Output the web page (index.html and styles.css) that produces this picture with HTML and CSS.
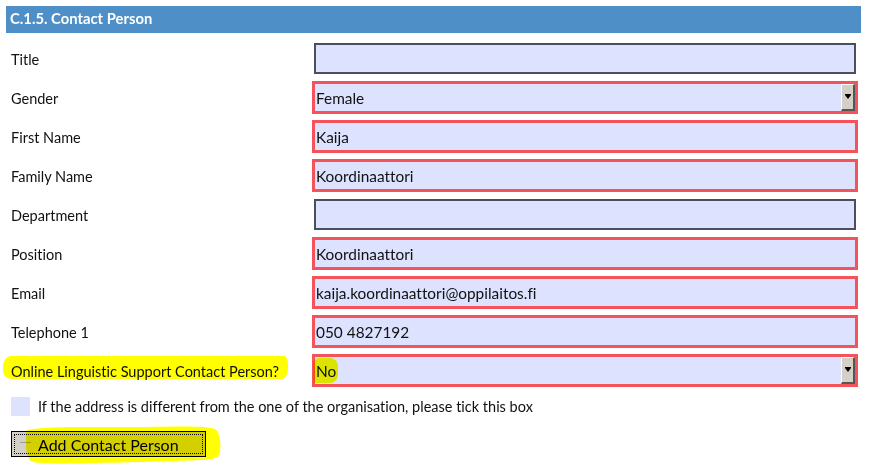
FILE: index.html
```html
<!DOCTYPE html>
<html>
<head>
<meta charset="utf-8">
<link rel="stylesheet" href="styles.css">
</head>
<body>
<div class="page">
  <div class="section-head">C.1.5. Contact Person</div>
  <div class="rows">
    <div class="label">Title</div>
    <div class="field plain"></div>

    <div class="label">Gender</div>
    <div class="field req select"><span class="val">Female</span><span class="arrow"><span class="tri"></span></span></div>

    <div class="label">First Name</div>
    <div class="field req"><span class="val">Kaija</span></div>

    <div class="label">Family Name</div>
    <div class="field req"><span class="val">Koordinaattori</span></div>

    <div class="label">Department</div>
    <div class="field plain"></div>

    <div class="label">Position</div>
    <div class="field req"><span class="val">Koordinaattori</span></div>

    <div class="label">Email</div>
    <div class="field req"><span class="val">kaija.koordinaattori@oppilaitos.fi</span></div>

    <div class="label">Telephone 1</div>
    <div class="field req"><span class="val">050 4827192</span></div>

    <div class="label">Online Linguistic Support Contact Person?</div>
    <div class="field req select"><span class="val">No</span><span class="arrow"><span class="tri"></span></span></div>
  </div>

  <div class="check-row">
    <span class="checkbox"></span>
    <span class="check-text">If the address is different from the one of the organisation, please tick this box</span>
  </div>

  <div class="btn-row">
    <div class="button"><span class="focus"><span class="dash"></span>Add Contact Person</span></div>
  </div>
</div>

<div class="hl hl-label"></div>
<div class="hl hl-no"></div>
<svg class="hl hl-btn" width="200" height="42" viewBox="0 0 200 42">
  <path d="M2 6 C20 2 60 3 120 3 C160 2 185 2 190 5 C195 8 196 18 195 28 C194 34 188 36 175 36 C150 37 120 38 70 39 C45 40 20 40 8 38 C3 36 1 30 1 20 C1 12 1 8 2 6 Z" fill="#ffff00"/>
</svg>
</body>
</html>
```

FILE: styles.css
```css
html, body {
  margin: 0;
  padding: 0;
  background: #ffffff;
}

body {
  width: 870px;
  height: 465px;
  overflow: hidden;
  position: relative;
  font-family: Lato, "Open Sans", "Liberation Sans", sans-serif;
  font-variant-ligatures: none;
  color: #111;
}

.page {
  padding: 6px 9px 0 6px;
}

.section-head {
  height: 27px;
  box-sizing: border-box;
  background: #4f8fc8;
  color: #ffffff;
  font-weight: bold;
  font-size: 14.8px;
  line-height: 25px;
  padding-left: 4px;
}

.rows {
  margin-top: 6px;
  margin-left: 5px;
  display: grid;
  grid-template-columns: 301px 546px;
  grid-auto-rows: 39px;
  align-items: center;
}

.label {
  font-size: 14.5px;
  color: #111;
  padding-top: 1px;
}

.field {
  box-sizing: border-box;
  background: #dde3fe;
  display: flex;
  align-items: center;
  font-size: 15.4px;
  color: #111;
}

.field.plain {
  height: 31px;
  margin: 0 2px;
  border: 2px solid #4b4e5e;
}

.field.req {
  height: 33px;
  border: 3px solid #f4535b;
  padding-left: 1px;
}

.field.select {
  justify-content: space-between;
}

.val {
  padding-top: 1px;
}

.arrow {
  align-self: stretch;
  width: 14px;
  box-sizing: border-box;
  background: #d4d0c8;
  border-top: 1px solid #ffffff;
  border-left: 1px solid #ffffff;
  border-right: 2px solid #555;
  border-bottom: 2px solid #555;
  display: flex;
  align-items: center;
  justify-content: center;
}

.tri {
  width: 0;
  height: 0;
  border-left: 3px solid transparent;
  border-right: 3px solid transparent;
  border-top: 4px solid #000;
  box-shadow: 0 -1px 0 0 #000;
}

.check-row {
  margin-top: 7px;
  margin-left: 5px;
  display: flex;
  align-items: center;
  gap: 8px;
  font-size: 14.5px;
}

.checkbox {
  width: 19px;
  height: 19px;
  background: #dde3fe;
  flex: none;
}

.btn-row {
  margin-top: 15px;
  margin-left: 5px;
}

.button {
  width: 195px;
  height: 26px;
  box-sizing: border-box;
  border: 1px solid #000;
  background: #d4d0c8;
  padding: 2px;
}

.focus {
  display: flex;
  align-items: center;
  height: 100%;
  box-sizing: border-box;
  border: 1px dotted #000;
  font-size: 16px;
  color: #000;
  padding-left: 5px;
}

.dash {
  width: 11px;
  height: 1px;
  background: #9a9a9a;
  margin-right: 7px;
  margin-top: -3px;
}

.hl {
  position: absolute;
  mix-blend-mode: multiply;
}

.hl-label {
  left: 3px;
  top: 356px;
  width: 285px;
  height: 23px;
  background: #ffff00;
  border-radius: 8px 4px 6px 9px / 10px 8px 10px 8px;
}

.hl-no {
  left: 313px;
  top: 358px;
  width: 25px;
  height: 25px;
  background: #ffff00;
  border-radius: 6px 8px 8px 4px;
}

.hl-btn {
  left: 25px;
  top: 424px;
}
```
